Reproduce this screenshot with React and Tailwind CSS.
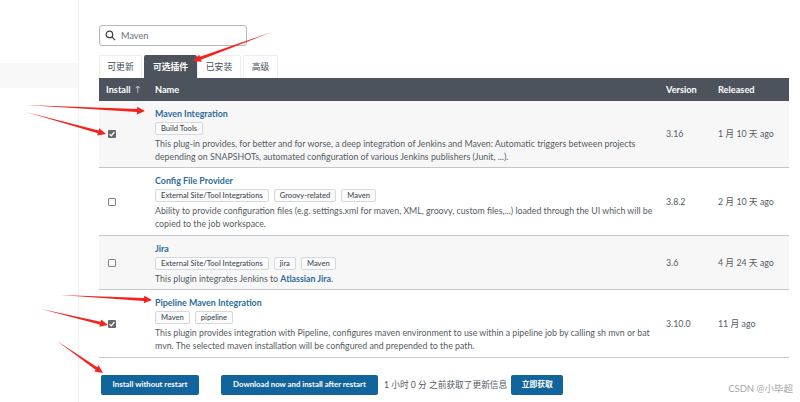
import React from "react";

function Tag({ children }) {
  return (
    <span className="inline-flex h-[13px] items-center rounded-[2px] border border-[#d5d8dc] bg-[#fbfbfb] px-[5px] text-[7.6px] font-medium leading-none text-[#444c55]">
      {children}
    </span>
  );
}

function Check({ checked }) {
  return checked ? (
    <span className="flex h-[8px] w-[8px] items-center justify-center rounded-[1px] bg-[#666a70]">
      <svg viewBox="0 0 8 8" className="h-[8px] w-[8px]">
        <path d="M1.6 4.2 L3.3 5.9 L6.4 2" fill="none" stroke="#fff" strokeWidth="1.3" />
      </svg>
    </span>
  ) : (
    <span className="h-[8px] w-[8px] rounded-[1px] border border-[#7f8286] bg-white" />
  );
}

function Row({ title, tags, desc, version, released, checked, shaded, h }) {
  return (
    <div className={`grid grid-cols-[56px_511px_52px_71px] border-b border-[#c3c6ca] ${shaded ? "bg-[#f7f7f8]" : "bg-white"} ${h}`}>
      <div className="flex items-center pl-[9px]">
        <Check checked={checked} />
      </div>
      <div className="flex flex-col pt-[6px]">
        <div className="h-[13px] whitespace-nowrap text-[8.9px] font-bold leading-[13px] text-[#2e6c99]">{title}</div>
        <div className="mt-[2px] flex gap-[5px]">
          {tags.map((t) => (
            <Tag key={t}>{t}</Tag>
          ))}
        </div>
        <div className="mt-[2px] whitespace-nowrap text-[8.8px] leading-[13px] text-[#555b62]">{desc}</div>
      </div>
      <div className="flex items-center text-[8.8px] text-[#555b62]">{version}</div>
      <div className="flex items-center whitespace-nowrap text-[8.8px] text-[#555b62]">{released}</div>
    </div>
  );
}

function Tab({ children, active, className }) {
  return active ? (
    <div className={`flex h-[23px] items-center justify-center rounded-t-[2px] bg-[#4c535c] text-[8.8px] font-bold text-white ${className}`}>
      {children}
    </div>
  ) : (
    <div className={`flex h-[23px] items-center justify-center rounded-t-[2px] border border-b-0 border-[#eeeeee] text-[8.8px] text-[#444c55] ${className}`}>
      {children}
    </div>
  );
}

function Btn({ children, className }) {
  return (
    <div className={`flex h-[20px] items-center justify-center rounded-[2px] bg-[#12659c] text-[7.8px] font-bold text-white ${className}`}>
      {children}
    </div>
  );
}

function Arrow({ x1, y1, x2, y2 }) {
  const dx = x2 - x1;
  const dy = y2 - y1;
  const len = Math.hypot(dx, dy);
  const ux = dx / len;
  const uy = dy / len;
  const nx = -uy;
  const ny = ux;
  const bx = x2 - ux * 8;
  const by = y2 - uy * 8;
  const pts = [
    [x1, y1],
    [bx + nx * 1.5, by + ny * 1.5],
    [bx + nx * 3.8, by + ny * 3.8],
    [x2, y2],
    [bx - nx * 3.8, by - ny * 3.8],
    [bx - nx * 1.5, by - ny * 1.5],
  ]
    .map((p) => p.join(","))
    .join(" ");
  return <polygon points={pts} fill="#f4231d" />;
}

export default function App() {
  return (
    <div
      className="relative flex h-[402px] w-[800px] overflow-hidden bg-white"
      style={{ fontFamily: 'Lato,"Noto Sans CJK SC",sans-serif' }}
    >
      <aside className="w-[79px] shrink-0 border-r border-[#f0f0f0] pt-[63px]">
        <div className="h-[25px] bg-[#f8f8f8]" />
      </aside>
      <main className="flex-1 pl-[20px] pt-[25px]">
        <div className="flex h-[21px] w-[148px] items-center gap-[5px] rounded-[3px] border border-[#b4b6b8] px-[5px] text-[9.2px] text-[#6c7177]">
          <svg viewBox="0 0 12 12" className="h-[11px] w-[11px]" fill="none" stroke="#3c4043" strokeWidth="1.3">
            <circle cx="4.8" cy="4.8" r="3.6" />
            <path d="M7.5 7.5 L11 11" />
          </svg>
          Maven
        </div>
        <div className="mt-[9px] flex">
          <Tab className="w-[43px]">可更新</Tab>
          <Tab active className="ml-[2px] w-[53px]">可选插件</Tab>
          <Tab className="w-[44px]">已安装</Tab>
          <Tab className="ml-[2px] w-[35px]">高级</Tab>
        </div>
        <div className="w-[690px]">
          <div className="grid h-[23px] grid-cols-[56px_511px_52px_71px] items-center bg-[#4c535c] text-[9.2px] font-bold text-white">
            <div className="flex items-center pl-[7px]">
              Install
              <span className="ml-[4px] text-[8px] font-normal text-[#d5d7da]">↑</span>
            </div>
            <div>Name</div>
            <div>Version</div>
            <div>Released</div>
          </div>
          <Row
            shaded
            checked
            h="h-[67px]"
            title="Maven Integration"
            tags={["Build Tools"]}
            desc={
              <>
                This plug-in provides, for better and for worse, a deep integration of Jenkins and Maven: Automatic triggers between projects
                <br />
                depending on SNAPSHOTs, automated configuration of various Jenkins publishers (Junit, ...).
              </>
            }
            version="3.16"
            released="1 月 10 天 ago"
          />
          <Row
            h="h-[68px]"
            title="Config File Provider"
            tags={["External Site/Tool Integrations", "Groovy-related", "Maven"]}
            desc={
              <>
                Ability to provide configuration files (e.g. settings.xml for maven, XML, groovy, custom files,...) loaded through the UI which will be
                <br />
                copied to the job workspace.
              </>
            }
            version="3.8.2"
            released="2 月 10 天 ago"
          />
          <Row
            shaded
            h="h-[54px]"
            title="Jira"
            tags={["External Site/Tool Integrations", "jira", "Maven"]}
            desc={
              <>
                This plugin integrates Jenkins to <span className="font-bold text-[#2e6c99]">Atlassian Jira</span>.
              </>
            }
            version="3.6"
            released="4 月 24 天 ago"
          />
          <Row
            checked
            h="h-[68px]"
            title="Pipeline Maven Integration"
            tags={["Maven", "pipeline"]}
            desc={
              <>
                This plugin provides integration with Pipeline, configures maven environment to use within a pipeline job by calling sh mvn or bat
                <br />
                mvn. The selected maven installation will be configured and prepended to the path.
              </>
            }
            version="3.10.0"
            released="11 月 ago"
          />
        </div>
        <div className="ml-[2px] mt-[17px] flex items-center">
          <Btn className="w-[98px]">Install without restart</Btn>
          <Btn className="ml-[22px] w-[157px]">Download now and install after restart</Btn>
          <span className="ml-[6px] text-[8.7px] text-[#555b62]">1 小时 0 分 之前获取了更新信息</span>
          <Btn className="ml-[4px] w-[52px]">立即获取</Btn>
        </div>
      </main>
      <div className="absolute bottom-[6px] right-[7px] text-[9.5px] text-[#a8a8a8]">CSDN @小毕超</div>
      <svg className="pointer-events-none absolute left-0 top-0" width="800" height="402">
        <Arrow x1={272} y1={32} x2={193} y2={61} />
        <Arrow x1={25} y1={105} x2={145} y2={111} />
        <Arrow x1={26} y1={112} x2={106} y2={134} />
        <Arrow x1={60} y1={295} x2={152} y2={300} />
        <Arrow x1={41} y1={309} x2={108} y2={325} />
        <Arrow x1={57} y1={341} x2={103} y2={373} />
      </svg>
    </div>
  );
}
